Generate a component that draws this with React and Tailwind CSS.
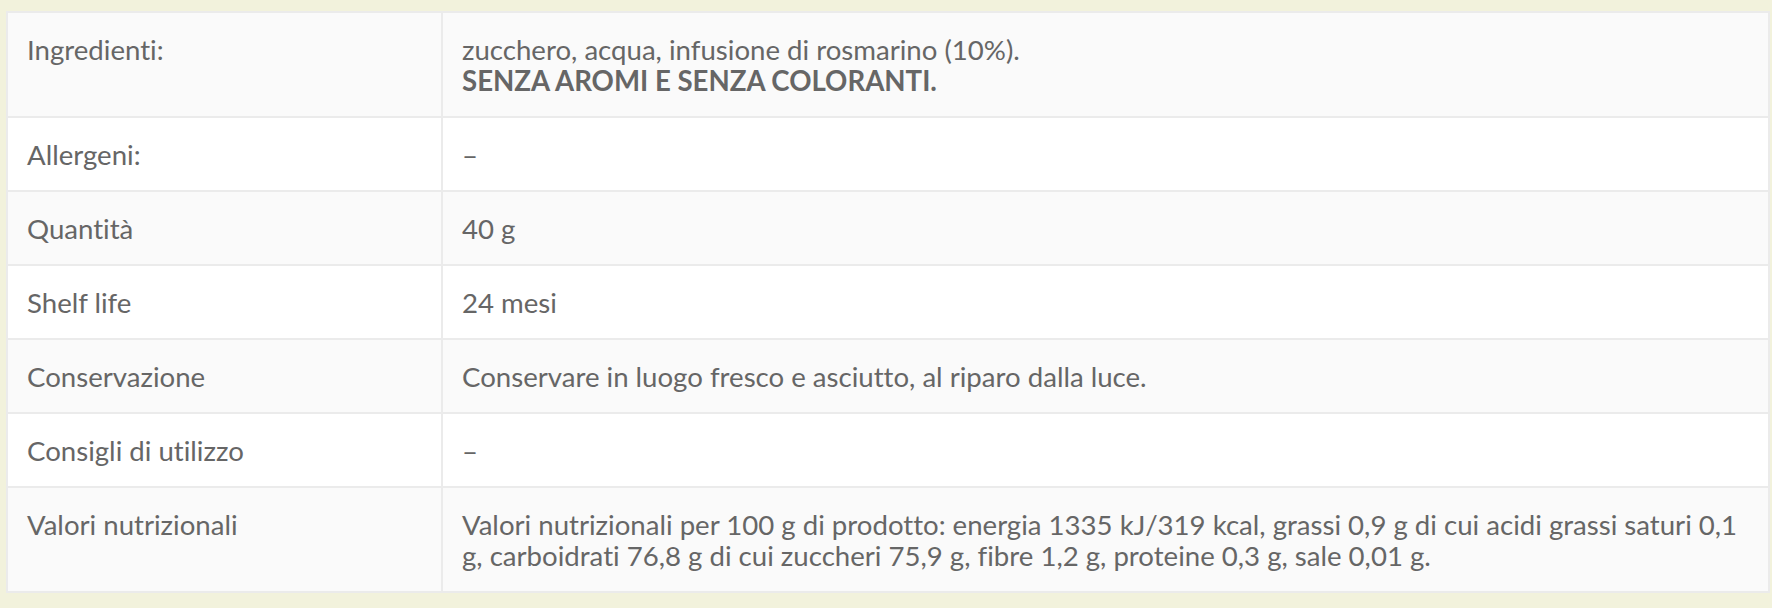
import React from 'react';

const rows = [
  {
    label: 'Ingredienti:',
    value: (
      <>
        zucchero, acqua, infusione di rosmarino (10%).
        <br />
        <strong className="font-bold">SENZA AROMI E SENZA COLORANTI.</strong>
      </>
    ),
  },
  { label: 'Allergeni:', value: '–' },
  { label: 'Quantità', value: '40 g' },
  { label: 'Shelf life', value: '24 mesi' },
  { label: 'Conservazione', value: 'Conservare in luogo fresco e asciutto, al riparo dalla luce.' },
  { label: 'Consigli di utilizzo', value: '–' },
  {
    label: 'Valori nutrizionali',
    value:
      'Valori nutrizionali per 100 g di prodotto: energia 1335 kJ/319 kcal, grassi 0,9 g di cui acidi grassi saturi 0,1 g, carboidrati 76,8 g di cui zuccheri 75,9 g, fibre 1,2 g, proteine 0,3 g, sale 0,01 g.',
  },
];

export default function App() {
  return (
    <div className="min-h-[608px] w-full bg-[#f2f2dc] pt-[11px] pb-[16px] pl-[6px] pr-[2px]">
      <div
        className="border-2 border-[#ebebeb] text-[27.6px] leading-[31px] text-[#666666] [font-variant-ligatures:no-common-ligatures]"
        style={{ fontFamily: 'Lato, "Noto Sans", sans-serif' }}
      >
        {rows.map((row, i) => (
          <div
            key={row.label}
            className={`grid grid-cols-[435px_1fr] ${i > 0 ? 'border-t-2 border-[#ebebeb]' : ''} ${
              i % 2 === 0 ? 'bg-[#fafafa]' : 'bg-white'
            }`}
          >
            <div className="px-[19px] pt-[21px] pb-[20px] border-r-2 border-[#ebebeb]">{row.label}</div>
            <div className="px-[19px] pt-[21px] pb-[20px]">{row.value}</div>
          </div>
        ))}
      </div>
    </div>
  );
}
